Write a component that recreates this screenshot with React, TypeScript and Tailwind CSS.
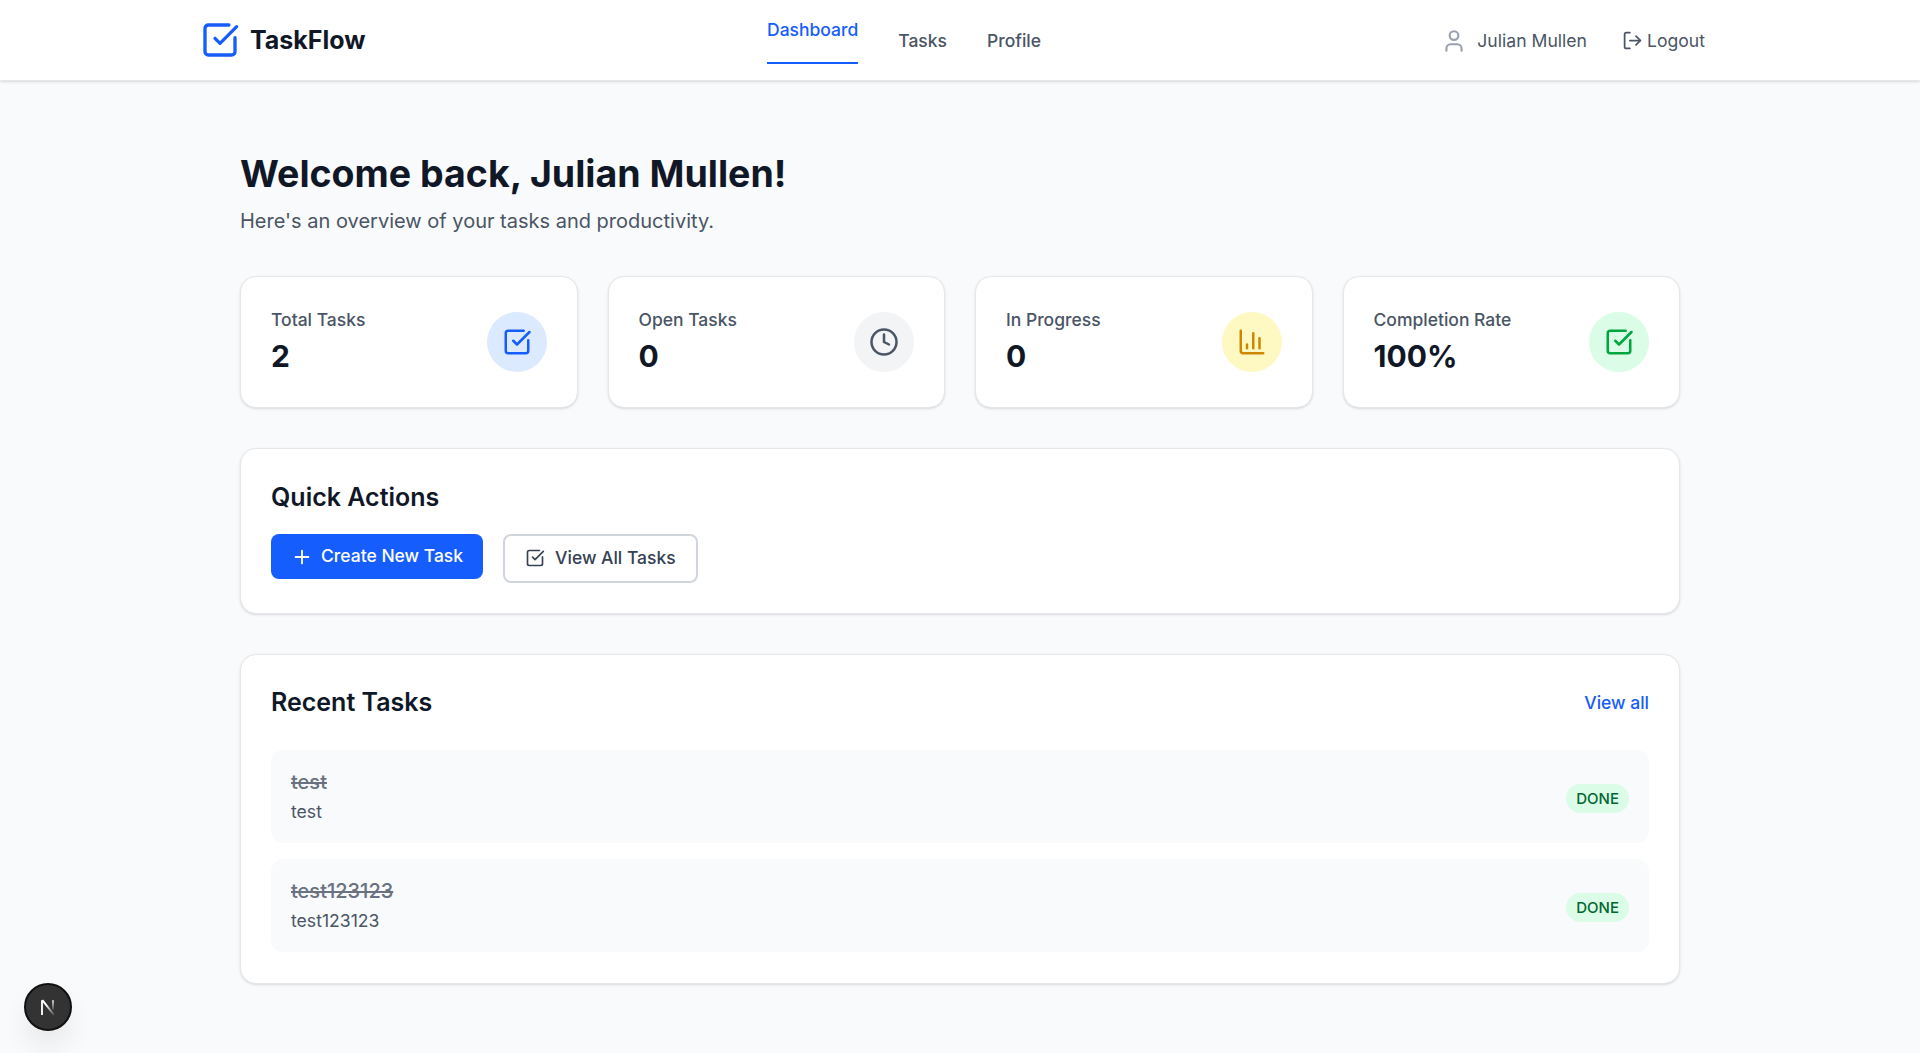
import { SquareCheckBig, Clock, ChartColumn, User, LogOut, Plus } from "lucide-react";

const stats = [
  { label: "Total Tasks", value: "2", circle: "bg-blue-100", Icon: SquareCheckBig, color: "text-blue-600" },
  { label: "Open Tasks", value: "0", circle: "bg-gray-100", Icon: Clock, color: "text-gray-600" },
  { label: "In Progress", value: "0", circle: "bg-yellow-100", Icon: ChartColumn, color: "text-yellow-600" },
  { label: "Completion Rate", value: "100%", circle: "bg-green-100", Icon: SquareCheckBig, color: "text-green-600" },
];

const tasks = ["test", "test123123"];

function NextLogo() {
  return (
    <svg width="16" height="17" viewBox="0 0 16 17" fill="none">
      <defs>
        <linearGradient id="nextFade" x1="6" y1="6" x2="14" y2="16" gradientUnits="userSpaceOnUse">
          <stop stopColor="#ffffff" />
          <stop offset="1" stopColor="#ffffff" stopOpacity="0.1" />
        </linearGradient>
        <linearGradient id="nextFade2" x1="13" y1="1" x2="13" y2="11" gradientUnits="userSpaceOnUse">
          <stop stopColor="#ffffff" />
          <stop offset="1" stopColor="#ffffff" stopOpacity="0.1" />
        </linearGradient>
      </defs>
      <path d="M2 16V1.2" stroke="#f0f0f0" strokeWidth="2" />
      <path d="M2.4 1.2 14 16" stroke="url(#nextFade)" strokeWidth="2" />
      <path d="M13 1.2V11" stroke="url(#nextFade2)" strokeWidth="1.6" />
    </svg>
  );
}

export default function App() {
  return (
    <div className="min-h-[1053px] bg-gray-50 font-['Inter',sans-serif] text-gray-900">
      <header className="h-[81px] border-b border-gray-200 bg-white shadow-sm">
        <div className="mx-auto flex h-20 w-[1536px] items-center pl-2 pr-[23px]">
          <div className="flex w-[567px] items-center gap-2.5">
            <SquareCheckBig size={40} className="text-blue-600" strokeWidth={2} />
            <span className="mt-0.5 text-[25px] font-bold">TaskFlow</span>
          </div>
          <nav className="flex flex-1 items-center gap-10 text-[17.5px] font-medium text-gray-600">
            <a className="border-b-2 border-blue-600 pb-5 pt-0.5 leading-6 text-blue-600">Dashboard</a>
            <a className="mt-0.5 leading-6">Tasks</a>
            <a className="mt-0.5 leading-6">Profile</a>
          </nav>
          <div className="mt-0.5 flex items-center gap-[35px] text-[17.6px] text-gray-600">
            <div className="flex items-center gap-2.5">
              <User size={26} className="text-gray-400" />
              <span>Julian Mullen</span>
            </div>
            <div className="flex items-center gap-1">
              <LogOut size={21} />
              <span>Logout</span>
            </div>
          </div>
        </div>
      </header>

      <main className="mx-auto w-[1440px] pt-[70px]">
        <h1 className="text-[37.5px] font-bold leading-[45px]">Welcome back, Julian Mullen!</h1>
        <p className="mt-2.5 text-xl leading-[30px] text-gray-600">Here's an overview of your tasks and productivity.</p>

        <div className="mt-10 grid grid-cols-4 gap-[30px]">
          {stats.map(({ label, value, circle, Icon, color }) => (
            <div key={label} className="flex h-[132px] items-center justify-between rounded-2xl border border-gray-200 bg-white px-[30px] shadow-sm">
              <div className="pb-[3px]">
                <div className="text-[17.5px] font-medium leading-[26px] text-gray-600">{label}</div>
                <div className="mt-[5px] text-3xl font-bold leading-9">{value}</div>
              </div>
              <div className={`flex h-[60px] w-[60px] items-center justify-center rounded-full ${circle}`}>
                <Icon size={30} className={color} />
              </div>
            </div>
          ))}
        </div>

        <section className="mt-10 rounded-2xl border border-gray-200 bg-white p-[30px] shadow-sm">
          <h2 className="text-[25px] font-semibold leading-9">Quick Actions</h2>
          <div className="mt-[19px] flex items-start gap-5">
            <button className="flex h-[45px] items-center gap-2 rounded-lg bg-blue-600 px-5 text-[17.5px] font-medium text-white">
              <Plus size={22} />
              Create New Task
            </button>
            <button className="flex h-[49px] items-center gap-2.5 rounded-lg border-2 border-gray-300 px-5 text-[17.5px] font-medium text-gray-700">
              <SquareCheckBig size={20} className="-mt-0.5" />
              View All Tasks
            </button>
          </div>
        </section>

        <section className="mt-10 rounded-2xl border border-gray-200 bg-white px-[30px] pb-[31px] pt-[29px] shadow-sm">
          <div className="flex items-center justify-between">
            <h2 className="text-[25px] font-semibold leading-9">Recent Tasks</h2>
            <a className="mt-0.5 text-[17.5px] font-medium text-blue-600">View all</a>
          </div>
          <div className="mt-[30px] flex flex-col gap-4">
            {tasks.map((t) => (
              <div key={t} className="flex h-[93px] items-center justify-between rounded-xl bg-gray-50 px-5">
                <div>
                  <div className="text-xl font-medium leading-7 text-gray-500 line-through">{t}</div>
                  <div className="mt-[3px] text-[17.6px] leading-[26px] text-gray-600">{t}</div>
                </div>
                <span className="mt-[3px] rounded-full bg-green-100 px-2.5 py-1 text-[15px] font-medium leading-[21px] text-green-800">DONE</span>
              </div>
            ))}
          </div>
        </section>
      </main>

      <div className="fixed bottom-[22px] left-6 flex h-12 w-12 items-center justify-center rounded-full border-2 border-[#111] bg-[#333] shadow-[0_16px_32px_-8px_rgba(0,0,0,0.15)]">
        <NextLogo />
      </div>
    </div>
  );
}
